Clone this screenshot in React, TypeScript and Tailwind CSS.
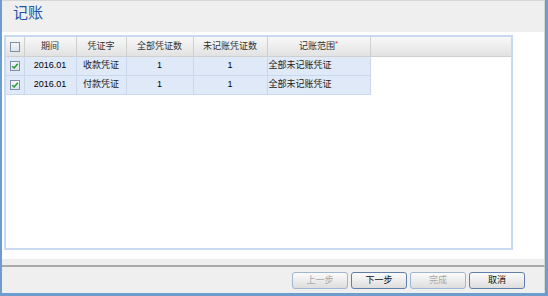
import React from "react";

const rows = [
  { period: "2016.01", word: "收款凭证", total: 1, pending: 1, range: "全部未记账凭证" },
  { period: "2016.01", word: "付款凭证", total: 1, pending: 1, range: "全部未记账凭证" },
];

const cjk = { fontFamily: '"Liberation Sans", "Noto Sans CJK SC", sans-serif' };

function Check({ checked }: { checked?: boolean }) {
  return (
    <span className="inline-flex h-[10px] w-[10px] items-center justify-center border border-[#7e8fa6] bg-gradient-to-b from-[#f4f6fa] to-[#dde3ec]">
      {checked && (
        <svg width="8" height="8" viewBox="0 0 8 8">
          <path d="M1.2 4.2 L3.2 6 L6.8 1.8" fill="none" stroke="#1f9a2c" strokeWidth="1.5" />
        </svg>
      )}
    </span>
  );
}

function Btn({ label, disabled }: { label: string; disabled?: boolean }) {
  return (
    <button
      className={
        "h-[17px] w-[56px] rounded-[3px] border bg-gradient-to-b from-[#fbfbfb] to-[#dedede] text-[9px] leading-none " +
        (disabled ? "border-[#9fb5d2] text-[#a8a8a8]" : "border-[#5f7fa8] text-[#111]")
      }
    >
      {label}
    </button>
  );
}

export default function App() {
  const th = "h-[19px] border-r border-b border-[#cfcfcf] text-center font-normal text-[#333]";
  const td = "h-[19px] border-r border-b border-[#c9d8ec] text-center text-[#222]";

  return (
    <div
      className="flex h-[296px] w-[548px] flex-col border-b-[3px] border-l-2 border-r-[3px] border-[#6d9ccd] bg-white text-[9px]"
      style={cjk}
    >
      {/* title */}
      <div className="h-[32px] border-t border-r border-[#d6d6d6] bg-[#efefef] px-[11px] pt-[2px] text-[15px] leading-[20px] text-[#2352a6]">
        记账
      </div>

      {/* grid */}
      <div className="h-[227px] border-r border-[#d6d6d6] pb-[9px] pl-[2px] pr-[31px] pt-[3px]">
        <div className="h-full border-2 border-[#c9daf0] bg-white">
          <div className="h-[20px] border-b border-[#d0d0d0] bg-gradient-to-b from-[#f8f8f8] to-[#e2e2e2]">
            <table className="table-fixed border-collapse">
              <colgroup>
                <col className="w-[18px]" />
                <col className="w-[52px]" />
                <col className="w-[50px]" />
                <col className="w-[67px]" />
                <col className="w-[74px]" />
                <col className="w-[103px]" />
              </colgroup>
              <thead className="bg-gradient-to-b from-[#f8f8f8] to-[#e2e2e2]">
                <tr>
                  <th className={th}>
                    <span className="flex justify-center pt-[1px]">
                      <Check />
                    </span>
                  </th>
                  <th className={th}>期间</th>
                  <th className={th}>凭证字</th>
                  <th className={th}>全部凭证数</th>
                  <th className={th}>未记账凭证数</th>
                  <th className={th}>
                    记账范围<span className="relative -top-[3px] text-[8px] text-[#e02020]">*</span>
                  </th>
                </tr>
              </thead>
              <tbody>
                {rows.map((r, i) => (
                  <tr key={i} className="bg-[#dfe9f7]">
                    <td className={td}>
                      <span className="flex justify-center pt-[1px]">
                        <Check checked />
                      </span>
                    </td>
                    <td className={td + " text-black"}>{r.period}</td>
                    <td className={td}>{r.word}</td>
                    <td className={td + " text-black"}>{r.total}</td>
                    <td className={td + " text-black"}>{r.pending}</td>
                    <td className={td + " !text-left pl-[1px]"}>{r.range}</td>
                  </tr>
                ))}
              </tbody>
            </table>
          </div>
        </div>
      </div>

      {/* separator band */}
      <div className="h-[8px] border-b-2 border-r border-b-[#a9a9a9] border-r-[#d6d6d6] bg-[#eeeeee]" />

      {/* footer */}
      <div className="flex flex-1 justify-end gap-[3px] border-r border-[#d6d6d6] bg-[#efefef] pr-[19px] pt-[5px]">
        <Btn label="上一步" disabled />
        <Btn label="下一步" />
        <Btn label="完成" disabled />
        <Btn label="取消" />
      </div>
    </div>
  );
}
